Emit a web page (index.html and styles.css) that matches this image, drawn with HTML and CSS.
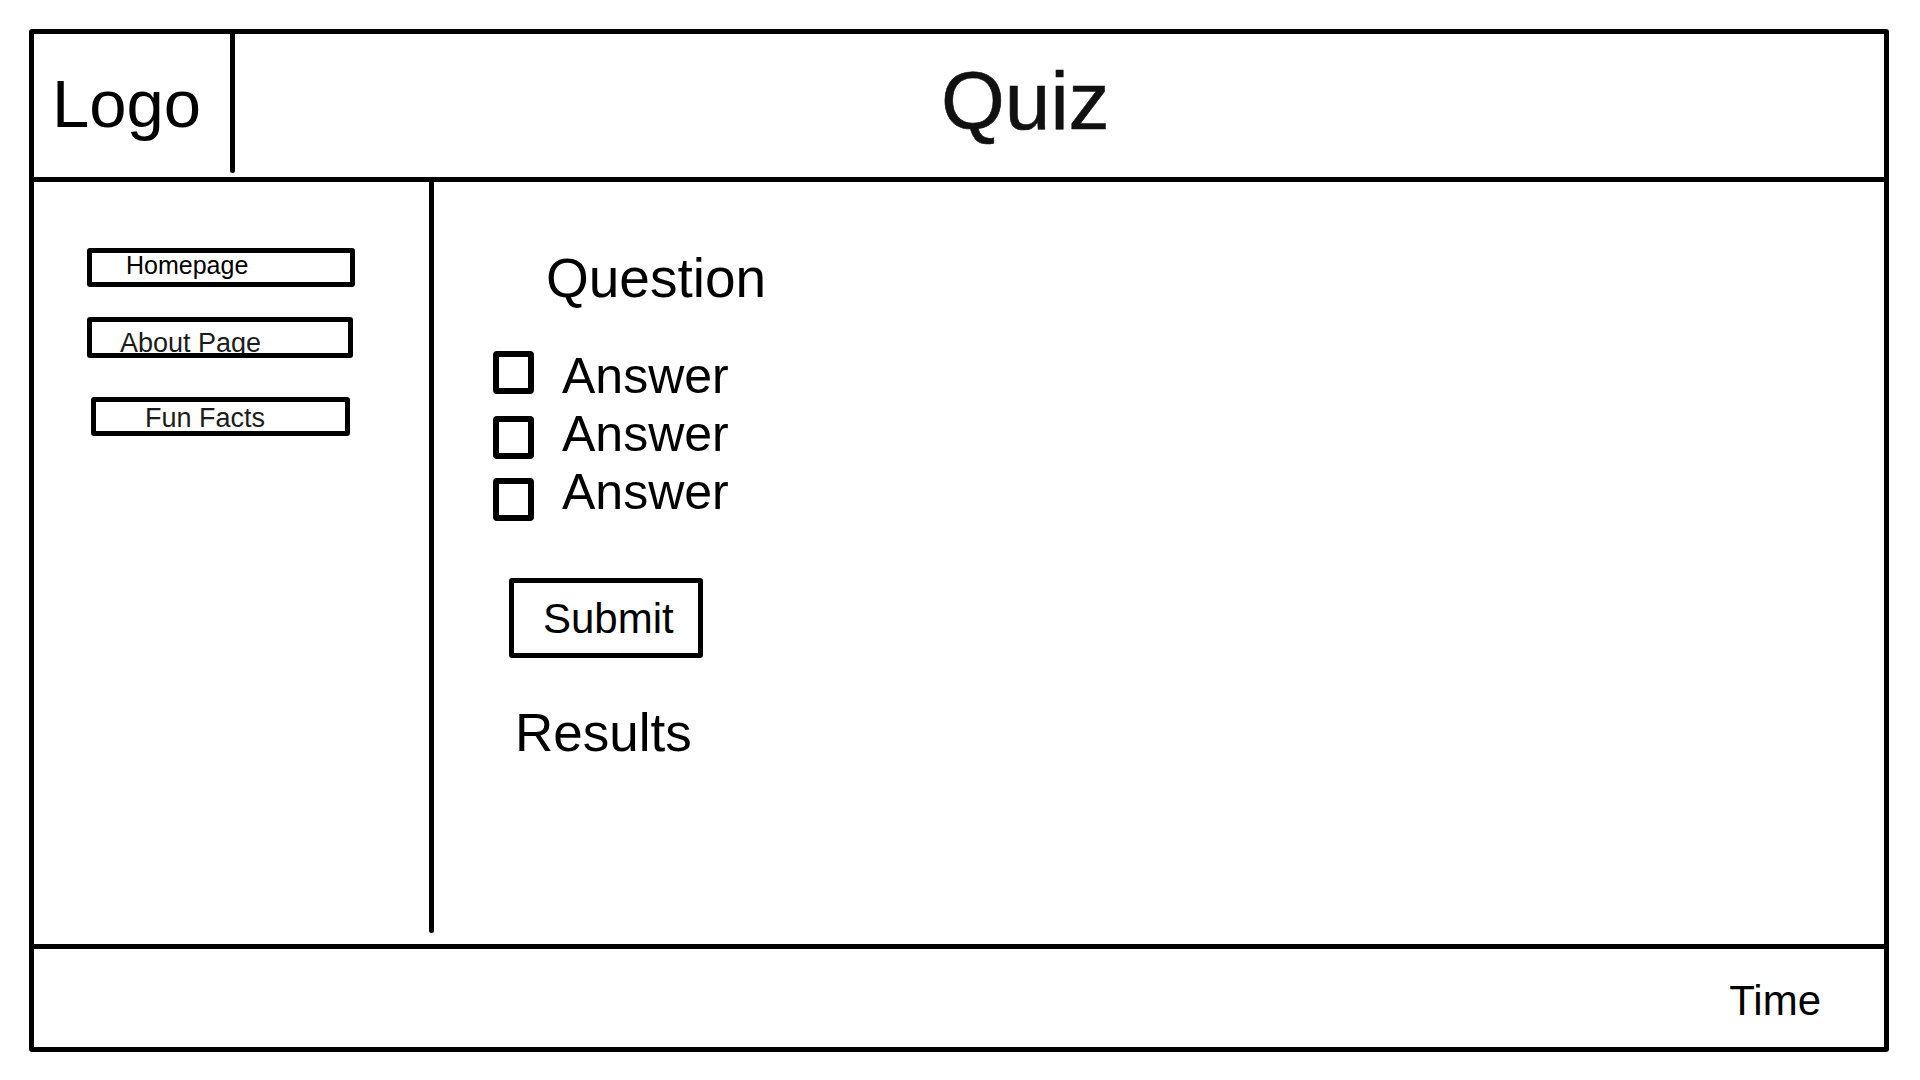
FILE: index.html
```html
<!DOCTYPE html>
<html lang="en">
<head>
<meta charset="utf-8">
<title>Quiz</title>
<link rel="stylesheet" href="styles.css">
</head>
<body>
<div class="frame">
  <header class="header">
    <div class="logo">Logo</div>
    <div class="vline vline-logo"></div>
    <h1 class="title">Quiz</h1>
  </header>
  <div class="content">
    <nav class="sidebar">
      <a class="nav-btn nav-home" href="#">Homepage</a>
      <a class="nav-btn nav-about" href="#">About Page</a>
      <a class="nav-btn nav-fun" href="#">Fun Facts</a>
    </nav>
    <div class="vline vline-side"></div>
    <main class="main">
      <h2 class="question">Question</h2>
      <ul class="answers">
        <li class="answer answer-1"><span class="box"></span><span class="answer-text">Answer</span></li>
        <li class="answer answer-2"><span class="box"></span><span class="answer-text">Answer</span></li>
        <li class="answer answer-3"><span class="box"></span><span class="answer-text">Answer</span></li>
      </ul>
      <button class="submit" type="button">Submit</button>
      <h2 class="results">Results</h2>
    </main>
  </div>
  <footer class="footer"><span class="time">Time</span></footer>
</div>
</body>
</html>
```
FILE: styles.css
```css
* {
  box-sizing: border-box;
}

html, body {
  margin: 0;
  background: #fff;
}

body {
  padding: 29px 0 0 29px;
  font-family: "Liberation Sans", Arial, sans-serif;
  color: #000;
}

.frame {
  width: 1860px;
  height: 1023px;
  border: 5px solid #000;
  border-radius: 3px;
  display: flex;
  flex-direction: column;
}

/* Header */
.header {
  height: 148px;
  border-bottom: 5px solid #000;
  display: flex;
}

.logo {
  width: 196px;
  padding: 36px 0 0 18px;
  font-size: 67px;
  line-height: 1;
}

.vline {
  width: 5px;
  background: #000;
  border-radius: 0 0 3px 3px;
  flex-shrink: 0;
}

.vline-logo {
  margin-bottom: 4px;
}

.title {
  margin: 0;
  padding: 26px 0 0 706px;
  font-size: 82px;
  font-weight: 400;
  line-height: 1;
  color: #111;
  -webkit-text-stroke: 0.6px #111;
}

/* Content */
.content {
  height: 762px;
  display: flex;
}

.sidebar {
  width: 395px;
  display: flex;
  flex-direction: column;
  align-items: flex-start;
  padding-top: 66px;
}

.nav-btn {
  display: block;
  border: 5px solid #000;
  border-radius: 3px;
  overflow: hidden;
  line-height: 1;
  color: #000;
  text-decoration: none;
  white-space: nowrap;
}

.nav-home {
  margin-left: 53px;
  width: 268px;
  height: 39px;
  font-size: 25px;
  padding: 0 0 0 34px;
}

.nav-about {
  margin: 30px 0 0 53px;
  width: 266px;
  height: 41px;
  font-size: 27px;
  padding: 8px 0 0 28px;
  color: #1c1c1c;
}

.nav-fun {
  margin: 39px 0 0 57px;
  width: 259px;
  height: 39px;
  font-size: 27px;
  padding: 3px 0 0 49px;
  color: #1c1c1c;
}

.vline-side {
  margin-bottom: 11px;
}

.main {
  flex: 1;
  display: flex;
  flex-direction: column;
  align-items: flex-start;
  padding-top: 69px;
}

.question {
  margin: 0 0 0 112px;
  font-size: 55px;
  font-weight: 400;
  line-height: 1;
}

.answers {
  list-style: none;
  margin: 41px 0 0 59px;
  padding: 0;
}

.answer {
  display: flex;
  align-items: flex-start;
  height: 58px;
  font-size: 50px;
  line-height: 58px;
}

.box {
  width: 41px;
  height: 43px;
  border: 6px solid #000;
  border-radius: 4px;
  margin-right: 28px;
  flex-shrink: 0;
}

.answer-1 .box {
  margin-top: 4px;
}

.answer-2 .box {
  margin-top: 11px;
}

.answer-3 .box {
  margin-top: 15px;
}

.submit {
  margin: 57px 0 0 75px;
  width: 194px;
  height: 80px;
  border: 5px solid #000;
  border-radius: 3px;
  background: #fff;
  color: #000;
  font-family: inherit;
  font-size: 42px;
  line-height: 1;
  padding: 15px 0 13px 29px;
  text-align: left;
}

.results {
  margin: 48px 0 0 81px;
  font-size: 53px;
  font-weight: 400;
  line-height: 1;
}

/* Footer */
.footer {
  height: 103px;
  border-top: 5px solid #000;
  display: flex;
  justify-content: flex-end;
  padding: 31px 63px 0 0;
}

.time {
  font-size: 42px;
  line-height: 1;
}
```
